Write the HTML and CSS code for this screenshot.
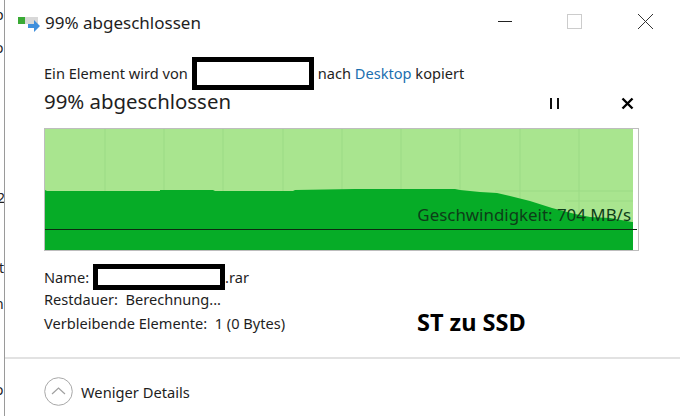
FILE: index.html
```html
<!DOCTYPE html>
<html lang="de">
  <head>
    <meta charset="UTF-8" />
    <title>99% abgeschlossen</title>
    <link rel="stylesheet" href="styles.css">
  </head>
  <body>
    <!-- cut off letters of the window behind -->
    <div class="behind">
      <span class="behind-char c1">p</span>
      <span class="behind-char c2">o</span>
      <span class="behind-char c3">2</span>
      <span class="behind-char c4">t</span>
      <span class="behind-char c5">n</span>
      <span class="behind-char c6">o</span>
    </div>

    <div class="window">
      <div class="titlebar">
        <svg class="app-icon" width="24" height="20" viewBox="0 0 24 20">
          <rect x="1" y="1" width="20" height="7" fill="#d8d8d8" />
          <rect x="1" y="1" width="7" height="7" fill="#3aaa35" />
          <path d="M11 8h6V4l6 6-6 6v-4h-6z" fill="#3f8fdc" />
        </svg>
        <span class="title">99% abgeschlossen</span>
        <div class="win-buttons">
          <svg width="16" height="16" viewBox="0 0 16 16"><path d="M2 7.5h14" stroke="#222" fill="none" /></svg>
          <svg width="16" height="16" viewBox="0 0 16 16"><rect x="0.5" y="0.5" width="14" height="14" stroke="#ccc" fill="none" /></svg>
          <svg width="16" height="16" viewBox="0 0 16 16"><path d="M0 0l15 15M15 0L0 15" stroke="#333" fill="none" /></svg>
        </div>
      </div>

      <div class="content">
        <div class="copy-line">
          <span class="copy-text">Ein Element wird von</span>
          <span class="redact redact-from"></span>
          <span class="copy-text">nach <a class="link">Desktop</a> kopiert</span>
        </div>

        <div class="heading-row">
          <span class="heading">99% abgeschlossen</span>
          <div class="actions">
            <svg width="11" height="11" viewBox="0 0 11 11"><path d="M1 0v11h2V0zM8 0v11h2V0z" fill="#111" /></svg>
            <svg width="13" height="13" viewBox="0 0 13 13"><path d="M1.5 1.5l10 10M11.5 1.5l-10 10" stroke="#000" stroke-width="2.4" fill="none" /></svg>
          </div>
        </div>

        <div class="chart">
          <svg class="chart-svg" width="593" height="121" viewBox="0 0 593 121">
            <rect x="0" y="0" width="588" height="121" fill="#a9e58f" />
            <path class="grid" d="M60 0v62M119 0v62M178 0v62M238 0v62M297 0v62M356 0v70M415 0v70M475 0v70M534 0v90" />
            <path class="grid" d="M450 62H588M520 72H588M545 92H588M570 111H588" />
            <path d="M0 61L2 62H115V61H168L170 62H248L250 61L310 60H410L415 61L435 63L452 64L465 67L485 72L507 79L530 85L545 88L565 89L587 93H588V121H0Z" fill="#06ac27" />
            <path d="M0 100.5H592" stroke="#0b2a10" fill="none" />
          </svg>
          <span class="speed">Geschwindigkeit: 704 MB/s</span>
        </div>

        <div class="details">
          <div class="detail-row name-row">
            <span>Name:</span>
            <span class="redact redact-name"></span>
            <span>.rar</span>
          </div>
          <div class="detail-row">Restdauer:&nbsp; Berechnung...</div>
          <div class="detail-row">Verbleibende Elemente:&nbsp; 1 (0 Bytes)</div>
          <span class="note">ST zu SSD</span>
        </div>
      </div>

      <div class="footer">
        <svg width="29" height="29" viewBox="0 0 29 29">
          <circle cx="14.5" cy="14.5" r="13.8" stroke="#a8a8a8" fill="none" />
          <path d="M8 17l6.5-6 6.5 6" stroke="#a0a0a0" stroke-width="1.2" fill="none" />
        </svg>
        <span>Weniger Details</span>
      </div>
    </div>
  </body>
</html>
```

FILE: styles.css
```css
html,
body {
  margin: 0;
  height: 100%;
}

body {
  width: 680px;
  height: 416px;
  overflow: hidden;
  position: relative;
  display: flex;
  background-color: #fff;
  font-family: "Noto Sans", "Open Sans", sans-serif;
  color: #1e1e1e;
}

.behind {
  width: 4px;
  flex-shrink: 0;
  position: relative;
  overflow: hidden;
}

.behind-char {
  position: absolute;
  left: -5px;
  font-size: 14px;
  line-height: 16px;
  color: #222;
}

.c1 { top: 7px; }
.c2 { top: 40px; }
.c3 { top: 190px; left: -3px; }
.c4 { top: 260px; left: -1px; }
.c5 { top: 296px; left: -5px; }
.c6 { top: 382px; }

.window {
  flex: 1;
  display: flex;
  flex-direction: column;
  border-left: 1px solid #9a9a9a;
}

.titlebar {
  height: 46px;
  display: flex;
  align-items: center;
  padding-left: 12px;
  padding-right: 26px;
}

.app-icon {
  margin-right: 4px;
  margin-top: 6px;
}

.title {
  font-size: 17px;
  flex: 1;
  padding-bottom: 2px;
}

.win-buttons {
  display: flex;
  gap: 55px;
  margin-bottom: 2px;
}

.content {
  padding-left: 39px;
  width: 595px;
  position: relative;
}

.copy-line {
  height: 33px;
  margin-top: 11px;
  display: flex;
  align-items: center;
  gap: 4px;
  font-size: 14.6px;
}

.copy-text {
  padding-bottom: 2px;
}

.link {
  color: #1a6fb0;
}

.redact {
  display: block;
  box-sizing: border-box;
  border: 5px solid #000;
  background-color: #fff;
}

.redact-from {
  width: 122px;
  height: 33px;
}

.redact-name {
  width: 132px;
  height: 26px;
}

.heading-row {
  height: 24px;
  display: flex;
  align-items: center;
}

.heading {
  font-size: 20.4px;
  flex: 1;
  padding-bottom: 2px;
}

.actions {
  display: flex;
  align-items: center;
  gap: 61px;
  padding-right: 5px;
  margin-top: 3px;
}

.chart {
  width: 593px;
  height: 121px;
  margin-top: 14px;
  border: 1px solid #bdbdbd;
  position: relative;
}

.chart-svg {
  display: block;
}

.grid {
  stroke: #9bdb85;
  fill: none;
}

.speed {
  position: absolute;
  right: 7px;
  top: 74px;
  font-size: 16.9px;
  line-height: 24px;
  color: #0d3d18;
}

.details {
  margin-top: 13px;
  height: 93px;
  position: relative;
  font-size: 14.6px;
}

.detail-row {
  height: 24px;
  display: flex;
  align-items: center;
}

.name-row {
  height: 26px;
  gap: 4px;
  margin-bottom: -3px;
}

.name-row .redact-name + span {
  margin-left: -4px;
}

.note {
  position: absolute;
  left: 373px;
  top: 44px;
  font-size: 23.5px;
  line-height: 28px;
  font-weight: bold;
  color: #000;
}

.footer {
  border-top: 2px solid #e2e2e2;
  flex: 1;
  display: flex;
  align-items: center;
  gap: 8px;
  padding-left: 39px;
  padding-top: 8px;
  font-size: 14.7px;
}
```
